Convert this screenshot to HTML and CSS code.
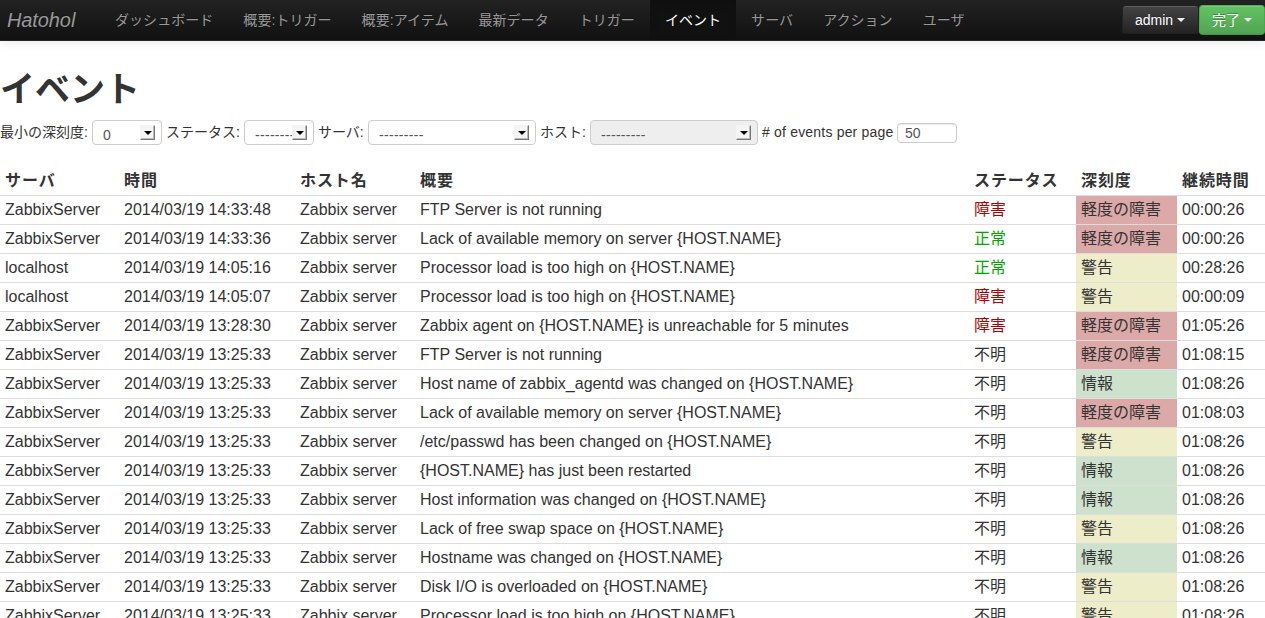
FILE: index.html
```html
<!DOCTYPE html>
<html lang="ja">
<head>
<meta charset="utf-8">
<title>Hatohol</title>
<link rel="stylesheet" href="styles.css">
</head>
<body>
<header class="navbar">
  <a class="brand">Hatohol</a>
  <nav class="nav">
    <a>ダッシュボード</a>
    <a>概要:トリガー</a>
    <a>概要:アイテム</a>
    <a>最新データ</a>
    <a>トリガー</a>
    <a class="active">イベント</a>
    <a>サーバ</a>
    <a>アクション</a>
    <a>ユーザ</a>
  </nav>
  <div class="buttons">
    <button class="btn btn-inverse" type="button">admin<i class="caret"></i></button>
    <button class="btn btn-success" type="button">完了<i class="caret"></i></button>
  </div>
</header>
<main>
  <h1>イベント</h1>
  <form class="filters">
    <span class="label">最小の深刻度:</span>
    <div class="select"><span class="value">0</span><i class="arrow"></i></div>
    <span class="label">ステータス:</span>
    <div class="select"><span class="value">---------</span><i class="arrow"></i></div>
    <span class="label">サーバ:</span>
    <div class="select"><span class="value">---------</span><i class="arrow"></i></div>
    <span class="label">ホスト:</span>
    <div class="select disabled"><span class="value">---------</span><i class="arrow"></i></div>
    <span class="label per-page"># of events per page</span>
    <input class="count" type="text" value="50">
  </form>
  <table class="events">
    <colgroup><col class="c-server"><col class="c-time"><col class="c-host"><col class="c-desc"><col class="c-status"><col class="c-severity"><col class="c-duration"></colgroup>
    <thead>
      <tr><th>サーバ</th><th>時間</th><th>ホスト名</th><th>概要</th><th>ステータス</th><th>深刻度</th><th>継続時間</th></tr>
    </thead>
    <tbody>
      <tr><td>ZabbixServer</td><td>2014/03/19 14:33:48</td><td>Zabbix server</td><td>FTP Server is not running</td><td class="problem">障害</td><td class="average">軽度の障害</td><td>00:00:26</td></tr>
      <tr><td>ZabbixServer</td><td>2014/03/19 14:33:36</td><td>Zabbix server</td><td>Lack of available memory on server {HOST.NAME}</td><td class="ok">正常</td><td class="average">軽度の障害</td><td>00:00:26</td></tr>
      <tr><td>localhost</td><td>2014/03/19 14:05:16</td><td>Zabbix server</td><td>Processor load is too high on {HOST.NAME}</td><td class="ok">正常</td><td class="warning">警告</td><td>00:28:26</td></tr>
      <tr><td>localhost</td><td>2014/03/19 14:05:07</td><td>Zabbix server</td><td>Processor load is too high on {HOST.NAME}</td><td class="problem">障害</td><td class="warning">警告</td><td>00:00:09</td></tr>
      <tr><td>ZabbixServer</td><td>2014/03/19 13:28:30</td><td>Zabbix server</td><td>Zabbix agent on {HOST.NAME} is unreachable for 5 minutes</td><td class="problem">障害</td><td class="average">軽度の障害</td><td>01:05:26</td></tr>
      <tr><td>ZabbixServer</td><td>2014/03/19 13:25:33</td><td>Zabbix server</td><td>FTP Server is not running</td><td>不明</td><td class="average">軽度の障害</td><td>01:08:15</td></tr>
      <tr><td>ZabbixServer</td><td>2014/03/19 13:25:33</td><td>Zabbix server</td><td>Host name of zabbix_agentd was changed on {HOST.NAME}</td><td>不明</td><td class="info">情報</td><td>01:08:26</td></tr>
      <tr><td>ZabbixServer</td><td>2014/03/19 13:25:33</td><td>Zabbix server</td><td>Lack of available memory on server {HOST.NAME}</td><td>不明</td><td class="average">軽度の障害</td><td>01:08:03</td></tr>
      <tr><td>ZabbixServer</td><td>2014/03/19 13:25:33</td><td>Zabbix server</td><td>/etc/passwd has been changed on {HOST.NAME}</td><td>不明</td><td class="warning">警告</td><td>01:08:26</td></tr>
      <tr><td>ZabbixServer</td><td>2014/03/19 13:25:33</td><td>Zabbix server</td><td>{HOST.NAME} has just been restarted</td><td>不明</td><td class="info">情報</td><td>01:08:26</td></tr>
      <tr><td>ZabbixServer</td><td>2014/03/19 13:25:33</td><td>Zabbix server</td><td>Host information was changed on {HOST.NAME}</td><td>不明</td><td class="info">情報</td><td>01:08:26</td></tr>
      <tr><td>ZabbixServer</td><td>2014/03/19 13:25:33</td><td>Zabbix server</td><td>Lack of free swap space on {HOST.NAME}</td><td>不明</td><td class="warning">警告</td><td>01:08:26</td></tr>
      <tr><td>ZabbixServer</td><td>2014/03/19 13:25:33</td><td>Zabbix server</td><td>Hostname was changed on {HOST.NAME}</td><td>不明</td><td class="info">情報</td><td>01:08:26</td></tr>
      <tr><td>ZabbixServer</td><td>2014/03/19 13:25:33</td><td>Zabbix server</td><td>Disk I/O is overloaded on {HOST.NAME}</td><td>不明</td><td class="warning">警告</td><td>01:08:26</td></tr>
      <tr><td>ZabbixServer</td><td>2014/03/19 13:25:33</td><td>Zabbix server</td><td>Processor load is too high on {HOST.NAME}</td><td>不明</td><td class="warning">警告</td><td>01:08:26</td></tr>
    </tbody>
  </table>
</main>
</body>
</html>
```
FILE: styles.css
```css
* {
  box-sizing: border-box;
}

html,
body {
  height: 100%;
  overflow: hidden;
}

body {
  margin: 0;
  background: #fff;
  color: #333;
  font: 14px/20px "Liberation Sans", "Noto Sans CJK JP", sans-serif;
}

.navbar {
  display: flex;
  height: 41px;
  background: linear-gradient(#222, #111);
  border-bottom: 1px solid #252525;
  box-shadow: 0 1px 10px rgba(0, 0, 0, .1);
  color: #999;
  text-shadow: 0 -1px 0 rgba(0, 0, 0, .25);
  white-space: nowrap;
}

.brand {
  width: 100px;
  padding: 10px 0 0 7px;
  font-size: 20px;
  font-style: italic;
  letter-spacing: -.1px;
}

.nav {
  display: flex;
  flex: 1;
}

.nav a {
  padding: 10px 15px;
  letter-spacing: .05px;
}

.nav .active {
  background: #111;
  box-shadow: inset 0 3px 8px rgba(0, 0, 0, .125);
  color: #fff;
}

.buttons {
  display: flex;
  padding-top: 5px;
}

.btn {
  display: flex;
  align-items: center;
  height: 30px;
  padding: 0 12px;
  border: 1px solid;
  border-radius: 4px;
  box-shadow: inset 0 1px 0 rgba(255, 255, 255, .15);
  color: #fff;
  font: inherit;
  text-shadow: 0 -1px 0 rgba(0, 0, 0, .25);
}

.btn-inverse {
  width: 77px;
  background: linear-gradient(#444, #222);
  border-color: #222 #222 #111;
}

.btn-success {
  width: 66px;
  background: linear-gradient(#62c462, #51a351);
  border-color: #57b257 #51a351 #459145;
}

.caret {
  margin-left: 4px;
  border-top: 4px solid #fff;
  border-right: 4px solid transparent;
  border-left: 4px solid transparent;
}

h1 {
  margin: 29px 0 10px;
  font-size: 35px;
  line-height: 40px;
}

.filters {
  display: grid;
  grid-template-columns: 88px 70px 74px 70px 46px 168px 46px 168px 131px 60px;
  column-gap: 4px;
  align-items: center;
  height: 25px;
  margin-bottom: 20px;
  white-space: nowrap;
}

.label {
  padding-bottom: 2px;
}

.per-page {
  letter-spacing: .19px;
}

.select {
  display: flex;
  align-items: center;
  height: 25px;
  padding: 0 6px 0 10px;
  border: 1px solid #ccc;
  border-radius: 4px;
  color: #555;
}

.select .value {
  flex: 1;
  min-width: 0;
  padding-top: 4px;
  overflow: hidden;
  letter-spacing: .3px;
}

.select.disabled {
  background: #eee;
}

.arrow {
  display: flex;
  align-items: center;
  justify-content: center;
  width: 15px;
  height: 15px;
  background: #f4f4f4;
  border: 1px solid;
  border-color: #f4f4f4 #777 #777 #f4f4f4;
  box-shadow: inset -1px -1px 0 #bbb;
}

.arrow::before {
  content: "";
  border-top: 4px solid #000;
  border-right: 4px solid transparent;
  border-left: 4px solid transparent;
}

.count {
  width: 60px;
  height: 20px;
  padding: 0 7px;
  border: 1px solid #ccc;
  border-radius: 4px;
  box-shadow: inset 0 1px 1px rgba(0, 0, 0, .075);
  color: #555;
  font: inherit;
}

.events {
  width: 1265px;
  table-layout: fixed;
  border-collapse: separate;
  border-spacing: 0;
  font-size: 16px;
  white-space: nowrap;
}

.c-server { width: 119px; }
.c-time { width: 176px; }
.c-host { width: 120px; }
.c-desc { width: 554px; }
.c-status { width: 107px; }
.c-severity { width: 101px; }
.c-duration { width: 88px; }

.events th,
.events td {
  height: 29px;
  padding: 4px 5px;
  text-align: left;
  vertical-align: top;
}

.events th {
  height: 30px;
  padding: 6px 5px 4px;
  letter-spacing: .9px;
}

.events td {
  border-top: 1px solid #ddd;
}

.events .problem { color: #b00000; }
.events .ok { color: #00a800; }
.average { background: #dca9a9; }
.warning { background: #eeedca; }
.info { background: #cde1cd; }
```
